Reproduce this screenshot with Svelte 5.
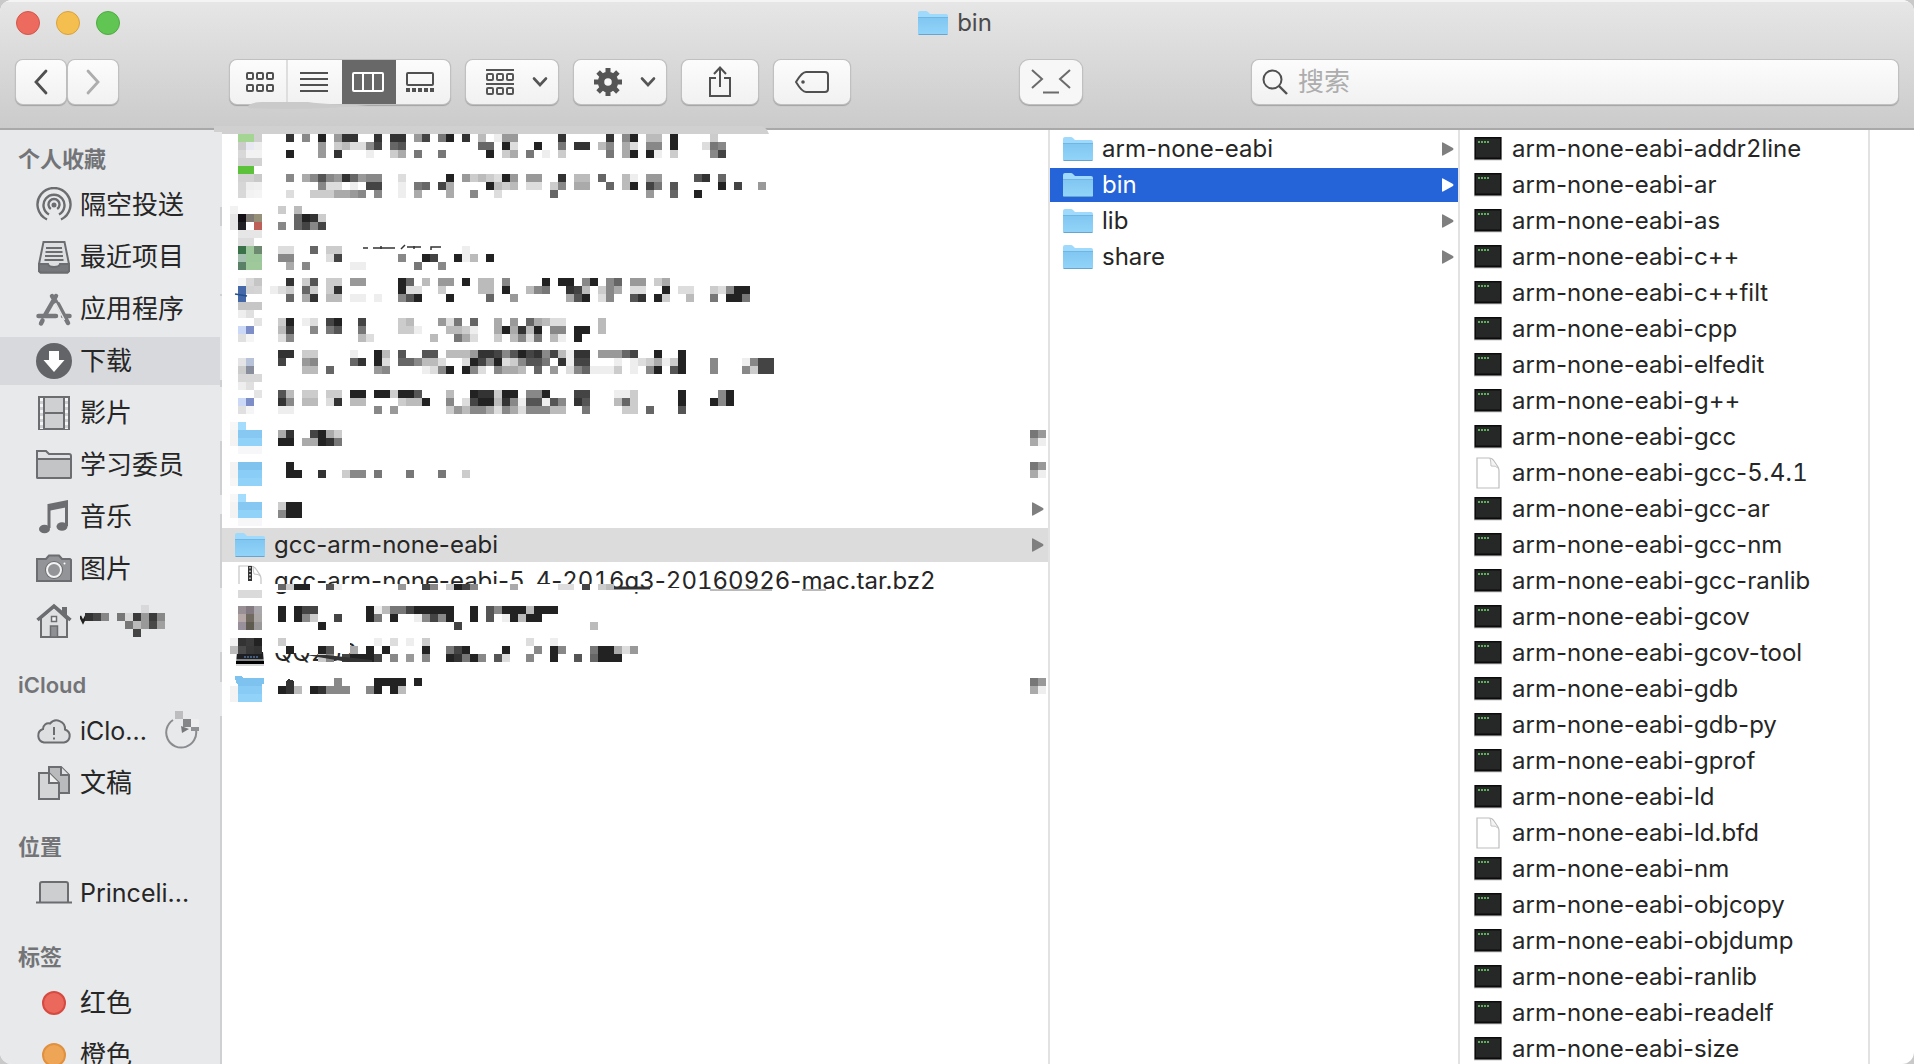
<script lang="ts">
  type Entry = { name: string; kind: string; arrow?: boolean; selected?: boolean };

  const favorites = [
    { label: '隔空投送', icon: 'airdrop' },
    { label: '最近项目', icon: 'recents' },
    { label: '应用程序', icon: 'apps' },
    { label: '下载', icon: 'downloads', selected: true },
    { label: '影片', icon: 'movies' },
    { label: '学习委员', icon: 'folder' },
    { label: '音乐', icon: 'music' },
    { label: '图片', icon: 'pictures' },
    { label: '', icon: 'home' }
  ];
  const sections = [
    { title: '个人收藏', items: favorites },
    { title: 'iCloud', items: [{ label: 'iClo...', icon: 'cloud', latin: true }, { label: '文稿', icon: 'documents' }] },
    { title: '位置', items: [{ label: 'Princeli...', icon: 'laptop', latin: true }] },
    { title: '标签', items: [{ label: '红色', icon: 'red' }, { label: '橙色', icon: 'orange' }] }
  ];

  const hidden: Entry = { name: '', kind: 'none' };
  const downloads: Entry[] = [
    ...Array(10).fill(hidden),
    { name: '', kind: 'none', arrow: true },
    { name: 'gcc-arm-none-eabi', kind: 'folder', arrow: true, selected: true },
    { name: 'gcc-arm-none-eabi-5_4-2016q3-20160926-mac.tar.bz2', kind: 'zip' },
    hidden,
    { name: 'QQ202', kind: 'drive' },
    hidden
  ];
  const toolchain: Entry[] = [
    { name: 'arm-none-eabi', kind: 'folder', arrow: true },
    { name: 'bin', kind: 'folder', arrow: true, selected: true },
    { name: 'lib', kind: 'folder', arrow: true },
    { name: 'share', kind: 'folder', arrow: true }
  ];
  const tools: Entry[] = [
    'addr2line', 'ar', 'as', 'c++', 'c++filt', 'cpp', 'elfedit', 'g++', 'gcc', 'gcc-5.4.1',
    'gcc-ar', 'gcc-nm', 'gcc-ranlib', 'gcov', 'gcov-tool', 'gdb', 'gdb-py', 'gprof', 'ld',
    'ld.bfd', 'nm', 'objcopy', 'objdump', 'ranlib', 'readelf', 'size'
  ].map((t) => ({ name: 'arm-none-eabi-' + t, kind: t === 'gcc-5.4.1' || t === 'ld.bfd' ? 'doc' : 'exec' }));
  const columns = [
    { title: '下载', rows: downloads, tone: 'muted' },
    { title: 'gcc-arm-none-eabi', rows: toolchain, tone: 'active' },
    { title: 'bin', rows: tools, tone: 'muted' }
  ];

  // Pixelated names: row number, then "column:grey levels" runs on an 8px grid.
  const grey: [number, string][] = [
    [0, '7:3 9:8 11:2 13:933 18:3 20:33 23:94 26:72 29:3 31:b 33:e99 39:ff 41:3 47:3 49:82 52:bb 55:2 60:c'],
    [1, '11:9 13:cbdd84 20:65 31:66 34:2d 38:2 41:7 43:33 46:b8 49:ad 52:88 55:2 59:d78'],
    [2, '7:2 11:9 13:3 17:e 20:ca 23:7 26:7 32:2 34:ca 37:7 39:e 41:c 47:7 49:a2 52:2e 55:c 60:84'],
    [5, '7:8 9:a858936988 21:d 27:2 29:9cbcd29f99 41:3 43:bb 46:6 49:be 52:99 55:f 58:53 61:6'],
    [6, '7:f 9:ff8dd 15:e 17:44 21:e 23:76 26:4a 32:2bcb 37:dd 40:c8 43:aa 47:6 49:b2 52:47 55:5 61:2 63:4 65:f9'],
    [7, '7:d 10:cccaa98 18:8 21:e 23:af 27:a 30:8 32:fd 40:6 52:9 55:6 58:2 61:f'],
    [9, '6:c 8:b'],
    [10, '8:623c'],
    [11, '6:8 8:6484'],
    [14, '6:dd 10:6 12:cc 29:e'],
    [15, '6:88 12:d4 21:8 24:24 28:2ebf2'],
    [16, '7:a 9:8 15:eef 23:7 26:8'],
    [18, '7:3 9:c5 12:cc 15:99 21:26 24:b 26:99 29:2 31:bb 34:8 39:2 41:22f82f86 50:99 53:ca'],
    [19, '5:edc 9:6c 12:c3 21:2dd 26:c 31:bb 34:2 37:b87 42:34b 46:c8a 50:dd 54:2 56:dd 60:cd822f'],
    [20, '7:6 9:a3 12:bb 15:ee 18:e 21:852 27:2 32:6 35:9 42:a52 46:d8 50:53 53:2c 57:b 60:7 62:227'],
    [23, '6:c2 9:ed 12:42 16:4 21:cb 26:9d7 30:6 33:a 35:9 37:6abdd 46:b'],
    [24, '6:b4 10:8 12:75 16:7 21:cce 27:bbce 33:a2a3b2 40:88 43:22 46:b'],
    [25, '6:d8 10:f 12:ff 16:bd 20:f 25:b 28:7ad 33:c 35:b8d7 40:be 43:2'],
    [27, '6:33 9:cc 15:e 18:2b 21:5 24:55 27:bbb9334852438 40:4be33 46:99964 53:2 56:2 60:f'],
    [28, '6:4 9:98 15:63 18:2d 21:668bbd 29:d2482dc8557 41:3e44 48:e 50:edcae 55:c2 60:8 64:e844'],
    [29, '9:bb 12:6f 18:98 24:ed82 29:28d 33:8aab 38:6 40:9 42:d86eeec 50:e 52:82 55:52 60:8 64:8c44'],
    [32, '6:5b 9:cc 12:cc 15:22 18:22c225 27:b 30:233c22 37:882 43:44 48:eec 56:2 60:f82'],
    [33, '6:38 9:bb 12:d3 15:bb 21:cbb2f 27:8 29:d422b38e55e58 43:35 48:b6c 53:f 56:2 60:282'],
    [34, '6:ee 18:8 20:9 27:c9b88ad8ad888bb 44:7 49:cc 52:6 56:5'],
    [37, '6:a3f 10:42ac 100:79'],
    [38, '6:22 9:aa237 100:ae'],
    [41, '7:2 22:f 24:f 28:f 100:79'],
    [42, '7:22 11:3 14:c88 18:7 22:7 26:7 29:c 100:ae'],
    [46, '6:c22'],
    [47, '6:822'],
    [59, '6:2 8:244 17:2eb77422222 30:2 32:58222b222'],
    [60, '6:2 8:28c 13:4 17:27 20:2 23:e8482 30:2 32:5 34:e2b22'],
    [61, '11:2 28:4 45:b'],
    [63, '6:c 18:e 20:d 22:e 24:c 37:d 40:e'],
    [64, '7:2 11:25 15:a 17:2 19:2 24:2 27:742 34:2 38:8 40:28 45:722ad9'],
    [65, '11:c8 14:4222 18:4 20:8 22:9 24:8 27:23728 33:5d 37:8 40:2 43:5 45:6222f'],
    [68, '13:8 18:2222 23:2 100:79'],
    [69, '6:23b 10:23888 17:82 20:2b 100:ae']
  ];
  // Pixelated file icons: row number, then the colours of grid columns 0-3.
  const tint: [number, string[]][] = [
    [0, ['', '#a5d593', '#a5d593', '#d0d0d0']],
    [1, ['', '#cccccc', '#e8e8f2', '#eeeeee']],
    [2, ['', '#d8d8d8', '#f2f2f2', '#f2f2f2']],
    [3, ['', '#d2d2d2', '#d2d2d2', '#d2d2d2']],
    [4, ['', '#5bc23a', '#5bc23a', '']],
    [5, ['', '#d2d2d2', '#d2d2d2', '#c9c9c9']],
    [6, ['', '#d6d6d6', '#eeeeee', '#f0f0f0']],
    [7, ['', '#d8d8d8', '#f2f2f2', '#f4f4f4']],
    [9, ['#f2f2f2', '', '', '']],
    [10, ['#e6e6e6', '#121014', '#807a74', '#969078']],
    [11, ['#e6e6e6', '#222126', '', '#bd6058']],
    [12, ['', '#e6e6e6', '#e6e6e6', '#e6e6e6']],
    [13, ['', '#dcdcdc', '#dcdcdc', '']],
    [14, ['', '#3b7148', '#9cc79b', '#6d8a70']],
    [15, ['', '#a5c0b0', '#9cc79b', '#9cc79b']],
    [16, ['', '#5b8068', '#9fc99a', '#9fc99a']],
    [18, ['', '#f6f6f6', '#d8d8d8', '#c5c5c5']],
    [19, ['', '#4468a8', '#d2d2d2', '#d4d4d4']],
    [20, ['', '#4468a8', '', '']],
    [21, ['', '#c6c6c6', '#c6c6c6', '#c6c6c6']],
    [22, ['', '#eeeeee', '#e0e0e0', '']],
    [23, ['', '', '', '#e4e4e4']],
    [24, ['', '#cbd9f7', '#7d8dc8', '']],
    [25, ['', '#e0e0e0', '#f5f5f5', '']],
    [28, ['', '#e4e4e6', '#b8c2d8', '']],
    [29, ['', '#cccccc', '#888e9c', '']],
    [30, ['', '#d8d8d8', '#d8d8d8', '#d8d8d8']],
    [31, ['', '#eeeeee', '#e0e0e0', '']],
    [32, ['', '', '', '#e4e4e4']],
    [33, ['', '#cbd9f7', '#7d8dc8', '']],
    [34, ['', '#e0e0e0', '#f5f5f5', '']],
    [36, ['#f7f7f7', '#a3dcfc', '', '']],
    [37, ['#f3f3f3', '#86c8f2', '#86c8f2', '#86c8f2']],
    [38, ['#f3f3f3', '#90d2f8', '#90d2f8', '#90d2f8']],
    [39, ['', '#f7f7f9', '#f7f7f9', '#f7f7f9']],
    [41, ['#f3f3f3', '#80c3ee', '#80c3ee', '#80c3ee']],
    [42, ['#f3f3f3', '#8acdf6', '#8acdf6', '#8acdf6']],
    [43, ['#f6f6f6', '#90d2f8', '#90d2f8', '#90d2f8']],
    [45, ['#f7f7f7', '#a3dcfc', '', '']],
    [46, ['#f3f3f3', '#86c8f2', '#86c8f2', '#86c8f2']],
    [47, ['#f3f3f3', '#90d2f8', '#90d2f8', '#90d2f8']],
    [48, ['', '#f7f7f9', '#f7f7f9', '#f7f7f9']],
    [57, ['', '#dadada', '#dadada', '#dadada']],
    [59, ['', '#999096', '#827a80', '#aaa8ac']],
    [60, ['', '#b5a8a6', '#706a60', '#aaa6a6']],
    [61, ['', '#98909a', '#5f5b50', '#9a9898']],
    [63, ['#f0f0f0', '#333333', '#3b3b3b', '#222222']],
    [64, ['#bbbbbb', '#4a4a4a', '#383838', '#333333']],
    [68, ['', '#7ec3ef', '#7ec3ef', '#7ec3ef']],
    [69, ['#f3f3f3', '#88cbf4', '#88cbf4', '#88cbf4']],
    [70, ['#f3f3f3', '#90d2f8', '#90d2f8', '#90d2f8']]
  ];

  function runs(spec: string) {
    const out: { x: number; fill: string }[] = [];
    for (const part of spec.split(' ')) {
      const [start, levels] = part.split(':');
      [...levels].forEach((d, i) => out.push({ x: (Number(start) + i) * 8, fill: '#' + d + d + d }));
    }
    return out;
  }
  const cells = [
    ...grey.flatMap(([row, spec]) => runs(spec).map((c) => ({ ...c, y: row * 8 }))),
    ...tint.flatMap(([row, list]) =>
      list.map((fill, i) => ({ x: i * 8, y: row * 8, fill })).filter((c) => c.fill)
    )
  ];
  const cutCells = runs('6:6c22 12:5e 21:9 24:48 27:c248 35:a 41:dd 44:4 46:cb');
  const edgeGaps = [[0, 77], [96, 68], [166, 84], [257, 54], [365, 19], [458, 64], [552, 54]];
  const nameCells: [number, number, string][] = [
    [5, 8, '#333'], [13, 8, '#454545'], [21, 8, '#868686'], [37, 8, '#777'], [45, 8, '#d8d8d8'],
    [53, 8, '#3b3b3b'], [61, 8, '#999'], [69, 8, '#3b3b3b'], [77, 8, '#888'], [61, 0, '#d8d8da'],
    [45, 16, '#777'], [53, 16, '#bbb'], [61, 16, '#999'], [69, 16, '#484848'], [77, 16, '#a0a0a0'],
    [53, 24, '#444']
  ];

  let view = $state('columns');
  let query = $state('');
</script>

{#snippet folder()}
  <svg class="glyph" width="30" height="26" viewBox="0 0 30 26" aria-hidden="true">
    <defs>
      <linearGradient id="folderFill" x1="0" y1="0" x2="0" y2="1">
        <stop offset="0" stop-color="#80c6f1" /><stop offset="1" stop-color="#92d4f9" />
      </linearGradient>
    </defs>
    <path d="M0 3q0-2 2-2h6q1 0 2 1l2 2h16q2 0 2 2v18H0z" fill="#9fd9fb" />
    <path d="M0 7h30v16.500q0 1-1 1H1q-1 0-1-1z" fill="url(#folderFill)" />
    <path d="M0 7.500h30" stroke="#6fb6e2" />
    <path d="M.5 24.500h29" stroke="#64a6cf" />
  </svg>
{/snippet}

{#snippet chevron()}
  <svg width="16" height="12" viewBox="0 0 16 12" aria-hidden="true">
    <path d="M2 2.500l6 6.500 6-6.500" fill="none" stroke="#555" stroke-width="2.600" stroke-linecap="round" />
  </svg>
{/snippet}

{#snippet sideIcon(kind: string)}
  <svg width="36" height="36" viewBox="0 0 36 36" fill="none" stroke="#6c6d70" stroke-width="2" aria-hidden="true">
    {#if kind === 'airdrop'}
      <circle cx="18" cy="18" r="2.500" fill="#6c6d70" stroke="none" />
      <path d="M14.800 22.500a5.500 5.500 0 1 1 6.400 0M13 28a10.500 10.500 0 1 1 10 0M11 33a16.500 16.500 0 1 1 14 0" stroke-width="2.400" transform="translate(0 -.5)" />
    {:else if kind === 'recents'}
      <path d="M7.500 3h21l4.500 22v7l-1.500 1.500h-27L3 32v-7z" fill="#dedfe1" />
      <path d="M3 25h9c1 4 11 4 12 0h9v7l-1.500 1.500h-27L3 32z" fill="#77787b" />
      <path d="M10 9h16M9.500 13h17M9 17h18M8.500 21h19" stroke-width="1.800" />
    {:else if kind === 'apps'}
      <path d="M20 5L8.500 25M16 5l4 6M22 13l10 19M2.500 25h17.500M27 25h6.500M6.500 29.500l-1.500 3" stroke="#77787b" stroke-width="4.500" stroke-linecap="round" />
      <path d="M19.500 12l9 17" stroke="#e8e9eb" stroke-width="1.500" />
    {:else if kind === 'downloads'}
      <circle cx="18" cy="18" r="18" fill="#636468" stroke="none" />
      <path d="M13 8h10v9h5.500L18 29 7.500 17H13z" fill="#fff" stroke="none" />
    {:else if kind === 'movies'}
      <path d="M3 2h30v32H3z" fill="#cfd0d2" />
      <path d="M8 2v32M28 2v32M8 18h20" />
      <path d="M5.500 3v31M30.500 3v31" stroke="#f5f5f5" stroke-width="3" stroke-dasharray="3 3" />
    {:else if kind === 'folder'}
      <path d="M1 5h9l3 3h20q2 0 2 2v21q0 1-1 1H2q-1 0-1-1z" fill="#e0e1e3" transform="translate(0 -1)" />
      <path d="M1 12h34v18q0 1-1 1H2q-1 0-1-1z" fill="#c3c4c6" />
    {:else if kind === 'music'}
      <path d="M12 5l20-4v7l-20 4z" fill="#6c6d70" stroke="none" />
      <path d="M13 5v24M30.500 3v24" stroke-width="3" />
      <ellipse cx="8.500" cy="30" rx="5.500" ry="4.300" fill="#6c6d70" stroke="none" />
      <ellipse cx="26" cy="27.500" rx="5.500" ry="4.300" fill="#6c6d70" stroke="none" />
    {:else if kind === 'pictures'}
      <path d="M1 8h9l3-3.500h10L26 8h8l1 1v21H1z" fill="#939497" />
      <circle cx="18" cy="19" r="9" fill="#6c6d70" stroke="none" />
      <circle cx="18" cy="19" r="7" fill="#939497" stroke="#f3f3f3" />
      <circle cx="28.500" cy="12.500" r="1" fill="#fff" stroke="none" />
    {:else if kind === 'home'}
      <path d="M27 5h3v8h-3z" fill="#6c6d70" />
      <path d="M5 15L18 4l13 12v18H5z" fill="#dfe0e2" />
      <path d="M1.500 17L18 3l16.500 14" stroke-width="3.500" />
      <path d="M15.500 13.500h5v5h-5z" fill="#f2f2f2" stroke-width="1.500" />
      <path d="M14.500 23h7v11h-7z" fill="#8f9093" stroke-width="1.500" />
    {:else if kind === 'cloud'}
      <path d="M8 29.500a7 7 0 0 1-1-13.500 5.500 5.500 0 0 1 7-5.500 8.500 8.500 0 0 1 15 6 6.700 6.700 0 0 1-1 13z" fill="#dedfe1" />
      <path d="M18 14v8M18 24.500v2" />
    {:else if kind === 'documents'}
      <path d="M13 2h12l8 8v18H13z" fill="#b9babc" />
      <path d="M25 2v8h8" fill="#e0e1e3" />
      <path d="M3 8h10l10 10v16H3z" fill="#d4d5d7" />
      <path d="M13 8v10h10" fill="#efefef" />
    {:else if kind === 'laptop'}
      <path d="M4 27V9q0-2 2-2h24q2 0 2 2v18" fill="#cdced0" />
      <path d="M0 27.500h36" />
    {:else}
      <circle cx="18" cy="18" r="11" fill={kind === 'red' ? '#ea695c' : '#eea555'} stroke={kind === 'red' ? '#d64a40' : '#e0913f'} />
    {/if}
  </svg>
{/snippet}

<div class="window">
  <header>
    <div class="titlebar">
      <div class="lights">
        <button class="light close" aria-label="关闭"></button>
        <button class="light minimize" aria-label="最小化"></button>
        <button class="light zoom" aria-label="缩放"></button>
      </div>
      <h1>{@render folder()}<span>bin</span></h1>
    </div>

    <div class="toolbar">
      <div class="leading">
        <div class="nav">
          <button class="btn step" aria-label="后退">
            <svg width="16" height="28" viewBox="0 0 16 28"><path d="M13 3L3 14l10 11" fill="none" stroke="#505050" stroke-width="2.800" stroke-linecap="round" /></svg>
          </button>
          <button class="btn step" aria-label="前进">
            <svg width="16" height="28" viewBox="0 0 16 28"><path d="M3 3l10 11L3 25" fill="none" stroke="#adadad" stroke-width="2.800" stroke-linecap="round" /></svg>
          </button>
        </div>

        <div class="tools">
          <div class="segments">
            <button class:on={view === 'icons'} aria-label="图标" onclick={() => (view = 'icons')}>
              <svg width="28" height="20" viewBox="0 0 28 20" fill="none" stroke="currentColor" stroke-width="2">
                {#each [0, 12] as y}{#each [0, 10, 20] as x}<rect x={x + 1} y={y + 1} width="6" height="6" rx="1" />{/each}{/each}
              </svg>
            </button>
            <button class:on={view === 'list'} aria-label="列表" onclick={() => (view = 'list')}>
              <svg width="28" height="20" viewBox="0 0 28 20" stroke="currentColor" stroke-width="2"><path d="M0 1h28M0 7h28M0 13h28M0 19h28" /></svg>
            </button>
            <button class:on={view === 'columns'} aria-label="分栏" onclick={() => (view = 'columns')}>
              <svg width="32" height="20" viewBox="0 0 32 20" fill="none" stroke="currentColor" stroke-width="2"><rect x="1" y="1" width="30" height="18" rx="1" /><path d="M11 1v18M21 1v18" /></svg>
            </button>
            <button class:on={view === 'gallery'} aria-label="画廊" onclick={() => (view = 'gallery')}>
              <svg width="28" height="20" viewBox="0 0 28 20" fill="none" stroke="currentColor" stroke-width="2"><rect x="1" y="1" width="26" height="12" rx="1" /><path d="M0 18h28" stroke-width="4" stroke-dasharray="4 2" /></svg>
            </button>
          </div>
          <button class="btn menu" aria-label="排列">
            <svg width="28" height="26" viewBox="0 0 28 26" fill="none" stroke="#555" stroke-width="2">
              <path d="M0 1h28M0 15h28" />
              {#each [4, 18] as y}{#each [0, 10, 20] as x}<rect x={x + 1} y={y + 1} width="6" height="6" rx="1" />{/each}{/each}
            </svg>
            {@render chevron()}
          </button>
          <button class="btn menu" aria-label="操作">
            <svg width="28" height="28" viewBox="0 0 28 28">
              <circle cx="14" cy="14" r="7" fill="none" stroke="#555" stroke-width="6.500" />
              <g stroke="#555" stroke-width="5">
                {#each [0, 45, 90, 135] as a}<path d="M14 0v5M14 23v5" transform="rotate({a} 14 14)" />{/each}
              </g>
            </svg>
            {@render chevron()}
          </button>
          <button class="btn wide" aria-label="共享">
            <svg width="24" height="32" viewBox="0 0 24 32" fill="none" stroke="#505050" stroke-width="2"><path d="M8 12H2v18h20V12h-6M12 21V2M6 8l6-6.500L18 8" /></svg>
          </button>
          <button class="btn wide" aria-label="标签">
            <svg width="34" height="22" viewBox="0 0 34 22" fill="none" stroke="#505050" stroke-width="2"><path d="M11 1h19q3 0 3 3v14q0 3-3 3H11Q7 21 1 11 7 1 11 1z" /><circle cx="8" cy="11" r="1.800" fill="#505050" stroke="none" /></svg>
          </button>
        </div>
      </div>

      <button class="btn shell" aria-label="终端">
        <svg width="40" height="26" viewBox="0 0 40 26" fill="none" stroke="#6b6b6b" stroke-width="2"><path d="M1 1l10 9L1 19M39 1l-10 9 10 9M12 23.500h16" /></svg>
      </button>

      <label class="search">
        <svg width="26" height="26" viewBox="0 0 26 26" fill="none" stroke="#505050" stroke-width="2"><circle cx="10.500" cy="10.500" r="9" /><path d="M17 17l8 8" stroke-width="2.400" /></svg>
        <input type="text" placeholder="搜索" aria-label="搜索" bind:value={query} />
      </label>
    </div>
    <svg class="smear" width="560" height="32" viewBox="0 0 560 32" aria-hidden="true">
      <path d="M34 4q4-4 14-4h46q20 3 60 3-60 6-120 3z" fill="#cacaca" />
      <path d="M0 24h546q6 0 9 8H8v-2H0z" fill="#d0d0d0" />
    </svg>
  </header>

  <main>
    <nav class="sidebar">
      {#each sections as section}
        <section>
          <h2>{section.title}</h2>
          <ul>
            {#each section.items as item}
              <li>
                <a href="#{item.icon}" class:current={item.selected} class:latin={item.latin} aria-label={item.label || '个人'}>
                  {@render sideIcon(item.icon)}
                  {#if item.label}
                    <span>{item.label}</span>
                  {:else}
                    <svg width="86" height="36" viewBox="0 -2 86 36" aria-hidden="true">
                      <path d="M0 11l3 6 3-6" stroke="#222" stroke-width="2.500" fill="none" />
                      {#each nameCells as [x, y, fill]}<rect {x} {y} width="8" height="8" {fill} />{/each}
                    </svg>
                  {/if}
                  {#if item.icon === 'cloud'}
                    <svg class="progress" width="36" height="40" viewBox="0 0 36 40" aria-hidden="true">
                      <path d="M8 9a15 15 0 1 0 23 10" fill="none" stroke="#8b8c8f" stroke-width="2" />
                      <path d="M16 15l8 3-7 4z" fill="#77787b" />
                      <path d="M10 0h8v8h-8z" fill="#bdbdbf" /><path d="M18 8h8v8h-8z" fill="#85868a" />
                      <path d="M26 8h8v8h-8z" fill="#eee" /><path d="M26 16h8v4h-8z" fill="#909194" />
                    </svg>
                  {/if}
                </a>
              </li>
            {/each}
          </ul>
        </section>
      {/each}
    </nav>

    {#each columns as column, index}
      <section class="column" aria-label={column.title}>
        <ul>
          {#each column.rows as row}
            <li>
              <button class="row {column.tone}" class:selected={row.selected} aria-label={row.name || '项目'}>
                <span class="icon">
                  {#if row.kind === 'folder'}
                    {@render folder()}
                  {:else if row.kind === 'exec'}
                    <svg class="glyph" width="28" height="24" viewBox="0 0 28 24" aria-hidden="true">
                      <path d="M0 0h28v23.500H0z" fill="#9a9a9a" opacity=".5" />
                      <path d="M.5 0h27v22.500H.5z" fill="#0c0c0c" /><path d="M2 1.500h24v19H2z" fill="#262727" />
                      <path d="M4 5h11" stroke="#5fae5c" stroke-width="2" stroke-dasharray="2 1" />
                    </svg>
                  {:else if row.kind === 'doc'}
                    <svg class="glyph" width="24" height="32" viewBox="0 0 24 32" aria-hidden="true">
                      <path d="M1 1h12q3 0 5 3l4 6q1 2 1 4v17H1z" fill="#fff" stroke="#bdbdbd" stroke-width="1.200" />
                      <path d="M14 1q1 4 1 8 5-.5 7 2" fill="#f4f4f4" stroke="#c4c4c4" />
                    </svg>
                  {:else if row.kind === 'zip'}
                    <svg class="glyph" width="24" height="32" viewBox="0 0 24 32" aria-hidden="true">
                      <path d="M1 1h12q3 0 5 3l4 6q1 2 1 4v17H1z" fill="#fff" stroke="#c4c4c4" stroke-width="1.200" />
                      <path d="M15 1q0 4 1 8 5 0 6 2" fill="none" stroke="#c4c4c4" />
                      <path d="M12 1v15" stroke="#333" stroke-width="4" /><path d="M12 2v14" stroke="#ddd" stroke-width="1.500" stroke-dasharray="1.500 2" />
                    </svg>
                  {:else if row.kind === 'drive'}
                    <svg class="glyph" width="30" height="28" viewBox="0 0 30 28" aria-hidden="true">
                      <path d="M2 13h26l1 12H1z" fill="#1d1f22" /><path d="M1 21h28" stroke="#eee" /><path d="M1 22h28v3H1z" fill="#000" />
                      <path d="M9 18h14" stroke="#6c9ad0" stroke-dasharray="2 1" /><path d="M1 26h28" stroke="#aaa" />
                    </svg>
                  {/if}
                </span>
                <span class="name">{#each row.name.split(/(\d+)/) as part, i}{#if i % 2}<span class="digits">{part}</span>{:else}{part}{/if}{/each}</span>
                {#if row.arrow}
                  <svg class="arrow" width="12" height="14" viewBox="0 0 12 14" aria-hidden="true"><path d="M0 1q0-1 1-.5l10 5.500q1 1 0 2L1 13.500q-1 .5-1-.5z" fill="currentColor" /></svg>
                {/if}
              </button>
            </li>
          {/each}
        </ul>
        {#if index === 0}
          <svg class="mosaic" width="836" height="586" viewBox="-10 -4 836 586" aria-hidden="true" shape-rendering="crispEdges">
            {#each edgeGaps as [y, h]}<rect x="-10" y={y - 4} width="2" height={h} fill="#e8e9eb" />{/each}
            <path d="M40 450h332v8H40zM360 454h90v4h-90zM0 450h36v10H0zM40 502h80v17H40z" fill="#fff" />
            {#each cells as c}<rect x={c.x} y={c.y} width="8" height="8" fill={c.fill} />{/each}
            {#each cutCells as c}<rect x={c.x} y="450" width="8" height="6" fill={c.fill} />{/each}
            <g fill="none" stroke="#333" shape-rendering="auto">
              <path d="M384 454h36" stroke-width="3" />
              <path d="M480 456h62M572 456h24" stroke="#777" />
              <path d="M133 114h5M143 114h22M151 112v3M171 115l4-4M177 113h14M184 112v3M201 116v-3h10" stroke-width="1.500" />
              <path d="M76 521h20l46 5v2h-24z" fill="#333" stroke="none" />
              <path d="M5 160l12 2" stroke="#24508e" stroke-width="1.500" />
            </g>
            <path d="M5 545v-2q0-1 1-1h5l3 2h20v6H7z" fill="#7ec3ef" />
            <path d="M56 552v-5l3-2 5 2v5z" fill="#333" />
          </svg>
        {/if}
      </section>
    {/each}
    <div class="rest"></div>
  </main>
</div>

<style>
  :global(body) {
    background: #c9c9c9;
    overflow: hidden;
  }
  .window,
  .window * {
    box-sizing: border-box;
  }
  .window {
    display: flex;
    flex-direction: column;
    height: 100vh;
    overflow: hidden;
    border-radius: 12px;
    background: #fff;
    color: #262626;
    font-family: Inter, 'Noto Sans CJK SC', sans-serif;
    font-size: 24px;
    line-height: 34px;
  }
  button {
    font: inherit;
    color: inherit;
    padding: 0;
    margin: 0;
    border: 0;
    background: none;
  }
  ul {
    list-style: none;
    margin: 0;
    padding: 0;
  }
  svg {
    display: block;
    flex: none;
  }
  header {
    position: relative;
    flex: none;
    background: linear-gradient(#e6e6e6, #cbcbcb);
    border-top: 2px solid #f4f4f4;
    border-bottom: 2px solid #a9a9a9;
  }
  .titlebar {
    display: grid;
    grid-template-columns: 1fr auto 1fr;
    align-items: center;
    height: 42px;
    padding: 0 20px 0 16px;
  }
  .lights {
    display: flex;
    gap: 16px;
  }
  .light {
    width: 24px;
    height: 24px;
    border-radius: 50%;
    border: 1px solid;
  }
  .close {
    background: #ed6a5e;
    border-color: #d35549;
  }
  .minimize {
    background: #f5bf4f;
    border-color: #d8a13c;
  }
  .zoom {
    background: #61c554;
    border-color: #4faa41;
  }
  h1 {
    display: flex;
    align-items: center;
    gap: 9px;
    margin: 0;
    font-size: 24px;
    font-weight: 400;
    color: #4b4b4b;
  }
  .toolbar {
    display: flex;
    align-items: center;
    justify-content: space-between;
    padding: 16px 16px 24px;
  }
  .leading {
    display: flex;
    gap: 112px;
  }
  .nav {
    display: flex;
    gap: 2px;
  }
  .tools {
    display: flex;
    gap: 16px;
  }
  .btn,
  .segments,
  .search {
    display: flex;
    align-items: center;
    justify-content: center;
    height: 44px;
    border-radius: 7px;
    background: linear-gradient(#fcfcfc, #f1f1f1);
    box-shadow: 0 0 0 1px #c0c0c0, 0 1px 1px 1px #a2a2a2;
  }
  .step {
    width: 50px;
  }
  .menu {
    width: 92px;
    padding: 0 10px 0 20px;
    justify-content: space-between;
  }
  .wide {
    width: 76px;
  }
  .shell {
    width: 62px;
    border-radius: 9px;
    background: #f7f7f7;
  }
  .segments {
    overflow: hidden;
    color: #505050;
  }
  .segments button {
    display: flex;
    align-items: center;
    justify-content: center;
    width: 54px;
    height: 44px;
    padding-right: 2px;
  }
  .segments button:first-child {
    width: 58px;
    padding: 0 0 0 4px;
    border-right: 2px solid #dedede;
  }
  .segments button:last-child {
    padding-right: 6px;
  }
  .segments .on {
    background: #686868;
    color: #fff;
  }
  .search {
    flex: 0 1 646px;
    min-width: 200px;
    padding: 0 10px;
    gap: 10px;
  }
  .search input {
    flex: 1;
    min-width: 0;
    border: 0;
    outline: 0;
    padding: 0;
    background: none;
    font: inherit;
    font-size: 26px;
  }
  .search input::placeholder {
    color: #adadad;
  }
  .smear {
    position: absolute;
    left: 214px;
    top: 100px;
    z-index: 2;
  }
  main {
    flex: 1;
    min-height: 0;
    display: grid;
    grid-template-columns: 222px 828fr 410fr 410fr 44fr;
    overflow: hidden;
  }
  .sidebar {
    display: flex;
    flex-direction: column;
    gap: 18px;
    padding-top: 7px;
    background: #e8e9eb;
    border-right: 2px solid #cfd0d2;
    overflow: hidden;
  }
  .sidebar section {
    flex: none;
  }
  h2 {
    margin: 0;
    padding-left: 18px;
    font-size: 22px;
    font-weight: 600;
    line-height: 44px;
    color: #737477;
  }
  .sidebar ul {
    display: flex;
    flex-direction: column;
    gap: 4px;
  }
  .sidebar a {
    display: flex;
    align-items: center;
    gap: 8px;
    height: 48px;
    padding-left: 36px;
    color: inherit;
    text-decoration: none;
    white-space: nowrap;
    font-size: 26px;
  }
  .sidebar a.latin {
    font-size: 25px;
  }
  .sidebar a.current {
    background: #d8d9dd;
  }
  .progress {
    margin-left: 10px;
  }
  .column {
    position: relative;
    min-width: 0;
    padding-top: 2px;
    border-right: 2px solid #e2e2e2;
  }
  .column ul {
    display: flex;
    flex-direction: column;
    gap: 2px;
  }
  .row {
    display: flex;
    align-items: center;
    gap: 9px;
    width: 100%;
    height: 34px;
    padding: 0 4px 0 13px;
    text-align: left;
    white-space: nowrap;
  }
  .row.muted.selected {
    background: #dcdcdc;
  }
  .row.active.selected {
    background: #2563d9;
    color: #fff;
  }
  .icon {
    display: flex;
    flex: none;
    justify-content: center;
    width: 30px;
  }
  .name {
    flex: 1;
    min-width: 0;
    overflow: hidden;
  }
  .digits {
    font-variant-numeric: tabular-nums;
  }
  .arrow {
    color: #7f7f7f;
  }
  .active.selected .arrow {
    color: #fff;
  }
  .mosaic {
    position: absolute;
    left: -2px;
    top: 0;
  }
</style>
